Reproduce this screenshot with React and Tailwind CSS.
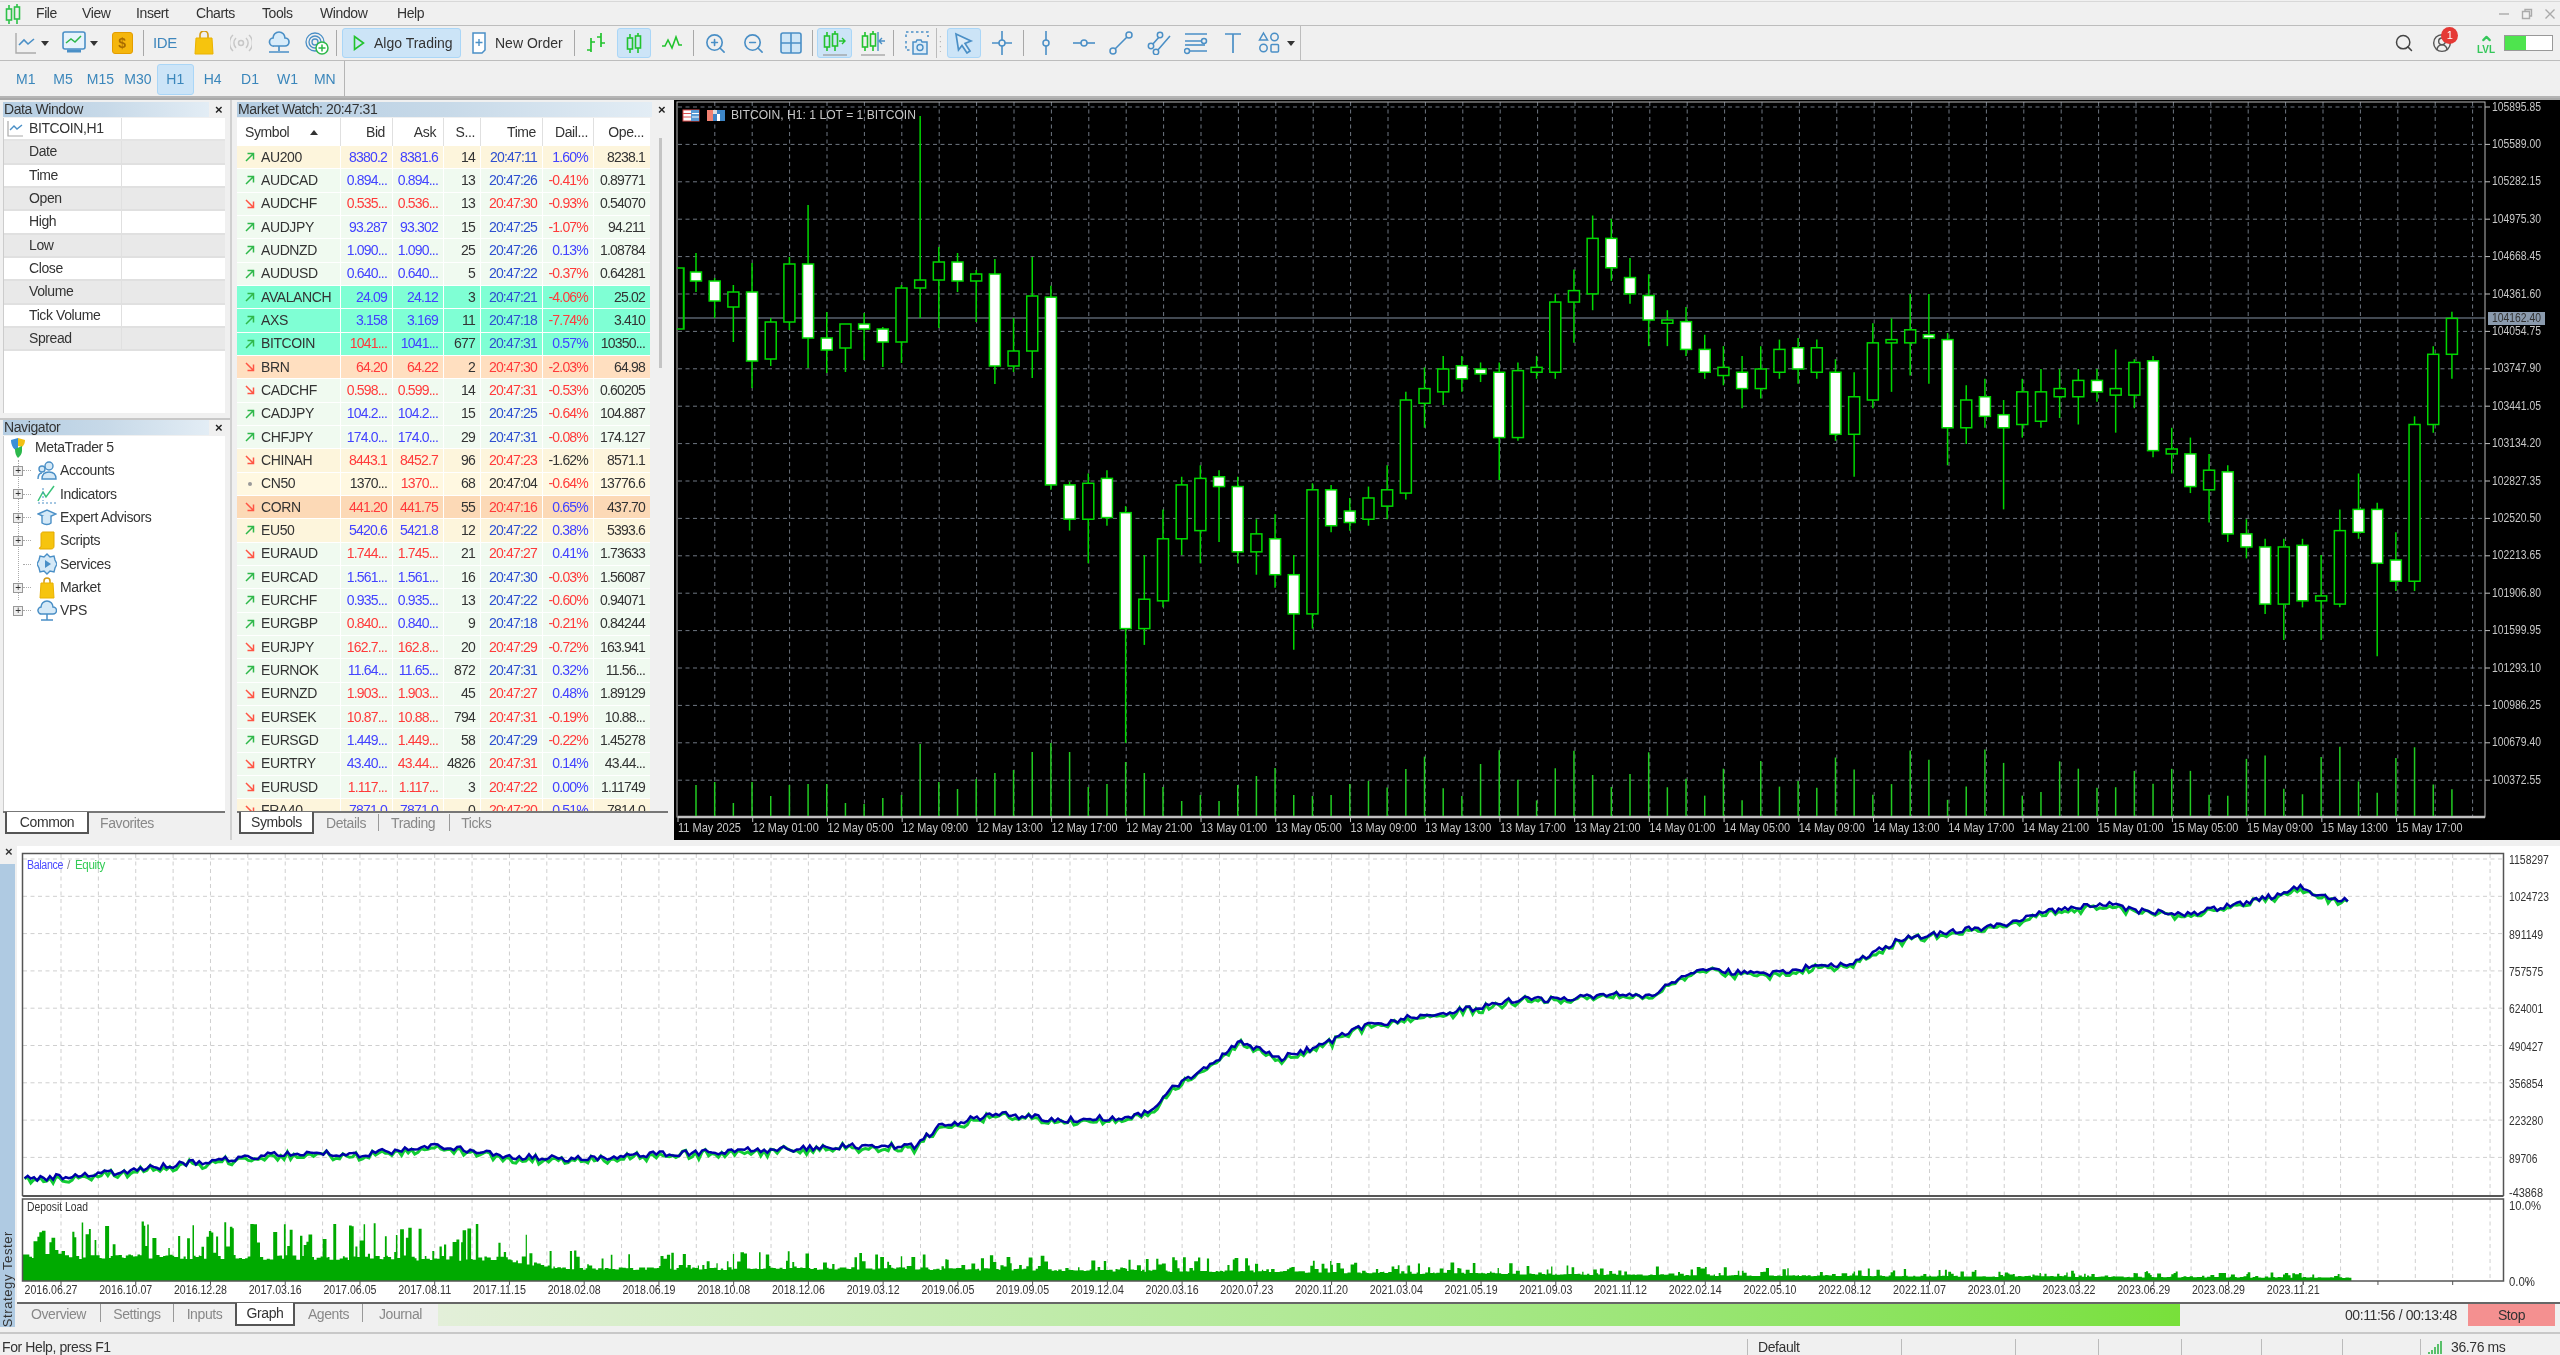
import { ChevronUp, CircleUserRound, Search, ZoomIn, ZoomOut } from 'lucide-react';

const rnd = (i) => {
	const v = Math.sin(i * 127.1 + 11.7) * 43758.5453;
	return v - Math.floor(v);
};

const BLUE = '#4a8fc6';
const GREEN = '#22c32e';

function Ico({ w = 24, h = 24, children, className = '' }) {
	return (
		<svg width={w} height={h} viewBox={`0 0 ${w} ${h}`} fill="none" className={className}>
			{children}
		</svg>
	);
}

function Caret() {
	return <span className="w-0 h-0 border-x-[4px] border-x-transparent border-t-[5px] border-t-[#333]" />;
}

function CandlePair({ c = GREEN, x = 0, y = 0 }) {
	return (
		<g stroke={c} strokeWidth="1.6" transform={`translate(${x} ${y})`}>
			<path d="M4 1v4M4 16v4M12 0v3M12 15v5" />
			<rect x="1.5" y="5" width="5" height="11" />
			<rect x="9.5" y="3" width="5" height="12" />
		</g>
	);
}

function Toolbar1() {
	const Sep = ({ ml = 0 }) => <span style={{ marginLeft: ml }} className="w-px h-[26px] bg-[#a8a8a8] shrink-0" />;
	const Slot = ({ w, on, children, className = '' }) => (
		<div
			style={{ width: w }}
			className={`shrink-0 h-[30px] flex items-center justify-center gap-1 rounded-[3px] ${
				on ? 'bg-[#cce4f7] border border-[#aad6f7]' : ''
			} ${className}`}>
			{children}
		</div>
	);
	return (
		<div className="h-[35px] flex items-center pl-[5px] border-b border-b-[#bdbdbd] relative">
			<Slot w={53}>
				<Ico w={22} h={22}>
					<path d="M1 1v20h20" stroke="#aaa" strokeWidth="1.4" />
					<path d="M4 13l5-5 4 4 6-5" stroke={BLUE} strokeWidth="1.6" />
				</Ico>
				<Caret />
			</Slot>
			<Slot w={43}>
				<Ico w={24} h={24}>
					<rect x="1" y="1" width="22" height="17" rx="2" stroke={BLUE} strokeWidth="1.6" fill="#e7f3fb" />
					<path d="M4 12l5-4 4 3 6-6" stroke="#2db84a" strokeWidth="1.5" />
					<path d="M5 20h14" stroke={BLUE} strokeWidth="3" />
				</Ico>
				<Caret />
			</Slot>
			<Slot w={42}>
				<div className="w-[21px] h-[22px] rounded-[3px] bg-[#f5b60d] border border-[#e39d00] flex items-center justify-center text-[#a86b00] font-bold text-[14px]">$</div>
			</Slot>
			<Sep />
			<Slot w={42}>
				<span className="text-[#3f87bd] text-[15px]">IDE</span>
			</Slot>
			<Slot w={36}>
				<Ico w={20} h={24}>
					<path d="M6 8V4a4 4 0 0 1 8 0v4" stroke="#d49a12" strokeWidth="1.6" />
					<path d="M2 7h16l1 16H1z" fill="#f6c40e" stroke="#eab200" />
				</Ico>
			</Slot>
			<Slot w={37}>
				<Ico w={22} h={20}>
					<g stroke="#c7c7c7" strokeWidth="1.5">
						<circle cx="11" cy="10" r="2.5" />
						<path d="M6 5a7 7 0 0 0 0 10M16 5a7 7 0 0 1 0 10M3 2a11 11 0 0 0 0 16M19 2a11 11 0 0 1 0 16" />
					</g>
				</Ico>
			</Slot>
			<Slot w={39}>
				<Ico w={22} h={24}>
					<g stroke={BLUE} strokeWidth="1.7">
						<path d="M6 15a4 4 0 0 1-1-8 6 6 0 0 1 12 0 4 4 0 0 1 0 8z" fill="#d8ecfa" />
						<path d="M11 15v5M1 21h20" />
					</g>
				</Ico>
			</Slot>
			<Slot w={37}>
				<Ico w={24} h={24}>
					<g stroke={BLUE} strokeWidth="1.3">
						<circle cx="10" cy="11" r="9" />
						<circle cx="10" cy="11" r="6" />
						<circle cx="10" cy="11" r="3" />
					</g>
					<circle cx="17" cy="17" r="6" fill="#fff" stroke="#2db84a" strokeWidth="1.5" />
					<path d="M17 13.5v7M13.5 17h7" stroke="#2db84a" strokeWidth="1.5" />
				</Ico>
			</Slot>
			<Sep ml={1} />
			<div className="ml-[5px] w-[119px] h-[30px] shrink-0 flex items-center pl-[10px] gap-[9px] rounded-[3px] bg-[#cce4f7] border border-[#aad6f7] tracking-normal text-[#333]">
				<Ico w={12} h={16}>
					<path d="M1.5 1.5l9 6.5-9 6.5z" stroke={GREEN} strokeWidth="1.6" />
				</Ico>
				<span>Algo Trading</span>
			</div>
			<div className="ml-[2px] w-[107px] h-[30px] shrink-0 flex items-center pl-[8px] gap-[8px] tracking-normal text-[#333]">
				<Ico w={16} h={22}>
					<path d="M2 1h12v17l-3 3H2z" stroke={BLUE} strokeWidth="1.5" fill="#fff" />
					<path d="M8 7v7M4.5 10.500h7" stroke={BLUE} strokeWidth="1.4" />
				</Ico>
				<span>New Order</span>
			</div>
			<Sep ml={4} />
			<Slot w={42}>
				<Ico w={22} h={24}>
					<path d="M6 7v14M2 19h4M6 11h4M16 2v14M12 6h4M16 12h4" stroke={GREEN} strokeWidth="1.7" />
				</Ico>
			</Slot>
			<Slot w={34} on>
				<Ico w={16} h={20}>
					<CandlePair />
				</Ico>
			</Slot>
			<Slot w={42}>
				<Ico w={22} h={16}>
					<path d="M1 11h3l3-6 4 8 4-11 3 8h3" stroke={GREEN} strokeWidth="1.6" />
				</Ico>
			</Slot>
			<Sep />
			<Slot w={43}>
				<ZoomIn size={23} color={BLUE} strokeWidth={1.7} />
			</Slot>
			<Slot w={32}>
				<ZoomOut size={23} color={BLUE} strokeWidth={1.7} />
			</Slot>
			<Slot w={43}>
				<Ico w={22} h={22}>
					<rect x="1" y="1" width="20" height="20" rx="2" fill="#cfe6f6" stroke={BLUE} strokeWidth="1.6" />
					<path d="M11 1v20M1 11h20" stroke={BLUE} strokeWidth="1.6" />
				</Ico>
			</Slot>
			<Sep />
			<Slot w={35} on className="ml-1">
				<Ico w={24} h={26}>
					<CandlePair x={0} y={1} />
					<path d="M16 11h6M19 8l3 3-3 3" stroke={GREEN} strokeWidth="1.4" />
					<path d="M0 25h24" stroke="#999" strokeWidth="1.2" />
				</Ico>
			</Slot>
			<Slot w={41}>
				<Ico w={24} h={26}>
					<CandlePair x={0} y={1} />
					<path d="M17 2v19" stroke={BLUE} strokeWidth="1.4" />
					<path d="M24 11h-5M21 8l-3 3 3 3" stroke={BLUE} strokeWidth="1.4" />
					<path d="M0 25h24" stroke="#999" strokeWidth="1.2" />
				</Ico>
			</Slot>
			<Sep />
			<Slot w={42} className="pl-1">
				<Ico w={24} h={24}>
					<path d="M1 6V1h22v5M1 10v9h5" stroke={BLUE} strokeWidth="1.5" strokeDasharray="2.500 2.500" />
					<path d="M8 11h3l1-2h4l1 2h5v12H8z" stroke={BLUE} strokeWidth="1.5" fill="#dcecf8" />
					<circle cx="15" cy="16.500" r="3" stroke={BLUE} strokeWidth="1.4" />
				</Ico>
			</Slot>
			<div className="w-[11px] h-[30px] shrink-0 border-l border-l-[#bbb] ml-0 pl-[2px] text-[#b5b5b5] text-[10px] leading-[5px] flex flex-col justify-center">
				<span>:</span>
				<span>:</span>
				<span>:</span>
			</div>
			<Slot w={34} on>
				<Ico w={20} h={22}>
					<path d="M2 2l15 7-6 2.500L16 19l-3 2-5-7.500-3.500 4.500z" stroke={BLUE} strokeWidth="1.7" fill="#dcecf8" />
				</Ico>
			</Slot>
			<Slot w={42}>
				<Ico w={22} h={26}>
					<path d="M11 1v24M1 13h20" stroke={BLUE} strokeWidth="1.6" />
					<circle cx="11" cy="13" r="3" fill="#f0f0f0" stroke={BLUE} strokeWidth="1.5" />
				</Ico>
			</Slot>
			<Sep />
			<Slot w={44}>
				<Ico w={10} h={26}>
					<path d="M5 1v24" stroke={BLUE} strokeWidth="1.6" />
					<circle cx="5" cy="13" r="3" fill="#f0f0f0" stroke={BLUE} strokeWidth="1.5" />
				</Ico>
			</Slot>
			<Slot w={32}>
				<Ico w={22} h={10}>
					<path d="M0 5h22" stroke={BLUE} strokeWidth="1.6" />
					<circle cx="11" cy="5" r="3" fill="#f0f0f0" stroke={BLUE} strokeWidth="1.5" />
				</Ico>
			</Slot>
			<Slot w={42}>
				<Ico w={24} h={24}>
					<path d="M5 19L19 5" stroke={BLUE} strokeWidth="1.6" />
					<circle cx="4" cy="20" r="3" fill="#f0f0f0" stroke={BLUE} strokeWidth="1.5" />
					<circle cx="20" cy="4" r="3" fill="#f0f0f0" stroke={BLUE} strokeWidth="1.5" />
				</Ico>
			</Slot>
			<Slot w={34}>
				<Ico w={24} h={24}>
					<path d="M5 14l8-9M10 20l13-15" stroke={BLUE} strokeWidth="1.6" />
					<circle cx="4" cy="15" r="2.700" fill="#f0f0f0" stroke={BLUE} strokeWidth="1.5" />
					<circle cx="13" cy="4" r="2.700" fill="#f0f0f0" stroke={BLUE} strokeWidth="1.5" />
					<circle cx="9" cy="21" r="2.700" fill="#f0f0f0" stroke={BLUE} strokeWidth="1.5" />
				</Ico>
			</Slot>
			<Slot w={40}>
				<Ico w={24} h={24}>
					<path d="M1 3h22M1 10h18M5 20h18" stroke={BLUE} strokeWidth="1.6" />
					<path d="M1 14h20" stroke={BLUE} strokeWidth="1.6" />
					<circle cx="20" cy="10" r="2.500" fill="#f0f0f0" stroke={BLUE} strokeWidth="1.5" />
					<circle cx="3" cy="20" r="2.500" fill="#f0f0f0" stroke={BLUE} strokeWidth="1.5" />
				</Ico>
			</Slot>
			<Slot w={34}>
				<Ico w={18} h={22}>
					<path d="M1 2h16M9 2v19" stroke={BLUE} strokeWidth="1.7" />
				</Ico>
			</Slot>
			<div className="w-[50px] h-[30px] shrink-0 flex items-center pl-[8px] gap-[7px] border-r-0">
				<Ico w={22} h={24}>
					<g stroke={BLUE} strokeWidth="1.5">
						<path d="M5.500 2l4 7h-8z" />
						<circle cx="16.500" cy="6" r="3.700" />
						<circle cx="5.500" cy="17" r="3.700" />
						<rect x="13" y="13.500" width="7.500" height="7.500" rx="1" />
					</g>
				</Ico>
				<Caret />
			</div>
			<div className="w-px h-[34px] bg-[#bdbdbd] shrink-0" />
			<div className="ml-auto flex items-center h-[30px]">
				<Search size={20} color="#444" strokeWidth={1.8} />
				<div className="ml-[18px] w-[26px] h-[24px] relative">
					<CircleUserRound size={20} color="#555" strokeWidth={1.7} className="mt-[2px]" />
					<span className="absolute -top-[4px] left-[9px] w-[17px] h-[17px] rounded-full bg-[#e53935] text-white text-[11px] flex items-center justify-center">1</span>
				</div>
				<div className="ml-[18px] w-[20px] flex flex-col items-center text-[#35c75a] leading-[10px]">
					<ChevronUp size={13} strokeWidth={4} />
					<span className="text-[10px] font-bold tracking-normal">LVL</span>
				</div>
				<div className="ml-[8px] mr-[7px] w-[49px] h-[16px] border border-[#999] bg-white">
					<div className="w-[21px] h-full bg-[#4ee44e]" />
				</div>
			</div>
		</div>
	);
}

function MenuBar() {
	const items = [
		['File', 46],
		['View', 54],
		['Insert', 60],
		['Charts', 66],
		['Tools', 58],
		['Window', 77],
		['Help', 40],
	];
	return (
		<div className="h-[25px] mt-[1px] border-t border-t-[#d8d8d8] border-b border-b-[#bdbdbd] flex items-center">
			<div className="w-[36px] pl-[5px] flex items-center">
				<Ico w={16} h={20}>
					<CandlePair c="#2fc24a" />
				</Ico>
			</div>
			{items.map(([t, w]) => (
				<span key={t} style={{ width: w }}>
					{t}
				</span>
			))}
			<div className="ml-auto flex items-center text-[#aaa] pr-[4px] gap-[11px]">
				<Ico w={12} h={12}>
					<path d="M1 6h10" stroke="#aaa" strokeWidth="1.4" />
				</Ico>
				<Ico w={12} h={12}>
					<path d="M1.500 3.500h7v7h-7zM4 3V1.500h6.500V8H9" stroke="#aaa" strokeWidth="1.4" />
				</Ico>
				<Ico w={12} h={12}>
					<path d="M1.500 1.500l9 9M10.500 1.500l-9 9" stroke="#aaa" strokeWidth="1.4" />
				</Ico>
			</div>
		</div>
	);
}

function Toolbar2() {
	const frames = ['M1', 'M5', 'M15', 'M30', 'H1', 'H4', 'D1', 'W1', 'MN'];
	return (
		<div className="h-[37px] flex items-start pl-[7px] border-b-2 border-b-[#b5b5b5]">
			<div className="flex h-[34px] items-end">
				{frames.map((f) => (
					<span
						key={f}
						className={`w-[37.4px] h-[31px] flex items-center justify-center tracking-normal text-[#3a86bb] rounded-[3px] ${
							f === 'H1' ? 'bg-[#cce4f7] border border-[#aad6f7]' : ''
						}`}>
						{f}
					</span>
				))}
			</div>
			<span className="w-px h-[35px] bg-[#b5b5b5]" />
		</div>
	);
}

function PanelHead({ title, width, closeAt }) {
	return (
		<div className="h-[15px] flex items-center">
			<div style={{ width }} className="h-[15px] bg-gradient-to-r from-[#b4cde2] via-[#c7d9e8] to-[#e3edf5] leading-[15px] pl-[1px] text-[#333]">
				{title}
			</div>
			<span style={{ marginLeft: closeAt }} className="font-bold text-[13px] leading-[15px] text-[#222]">×</span>
		</div>
	);
}

const dataRows = ['Date', 'Time', 'Open', 'High', 'Low', 'Close', 'Volume', 'Tick Volume', 'Spread'];

function DataWindow() {
	return (
		<div className="h-[320px] pt-[2px] pl-[3px] border-b-2 border-b-[#c8c8c8]">
			<PanelHead title="Data Window" width={206} closeAt={6} />
			<div className="h-[295px] w-[222px] mt-[1px] bg-white border-l border-l-[#ccc]">
				<div className="h-[23.33px] flex items-center border-b-2 border-b-[#e4e4e4]">
					<div className="w-[117px] flex items-center pl-[3px] gap-[5px]">
						<Ico w={17} h={17}>
							<path d="M1 1v15h15" stroke="#aaa" strokeWidth="1.2" />
							<path d="M3 10l4-4 3 3 5-4" stroke={BLUE} strokeWidth="1.4" />
						</Ico>
						<span>BITCOIN,H1</span>
					</div>
					<div className="flex-1 h-full border-l border-l-[#e0e0e0]" />
				</div>
				{dataRows.map((r, i) => (
					<div key={r} className={`h-[23.33px] flex items-center border-b-2 border-b-[#e0e0e0] ${i % 2 ? 'bg-white' : 'bg-[#e9e9e9]'}`}>
						<div className="w-[117px] pl-[25px]">{r}</div>
						<div className="flex-1 h-full border-l border-l-[#e0e0e0]" />
					</div>
				))}
			</div>
		</div>
	);
}

function NavIcon({ name }) {
	if (name === 'MetaTrader 5')
		return (
			<Ico w={18} h={22}>
				<path d="M2 3l7-2v13c-4-1-7-5-7-11z" fill="#3a8fd6" />
				<path d="M9 1l7 2c0 3-1 5-3 7L9 9z" fill="#f2c014" />
				<path d="M6 12l7-3v5c0 3-2 5-4 7-2-2-3-5-3-9z" fill="#2cb84c" />
			</Ico>
		);
	if (name === 'Accounts')
		return (
			<Ico w={20} h={20}>
				<g stroke={BLUE} strokeWidth="1.4" fill="#d5e9f7">
					<circle cx="12" cy="5" r="4" />
					<path d="M5 18c0-5 3-7 7-7s7 2 7 7z" />
					<circle cx="5" cy="8" r="3" />
					<path d="M1 18c0-4 1-6 4-6" />
				</g>
			</Ico>
		);
	if (name === 'Indicators')
		return (
			<Ico w={20} h={20}>
				<path d="M1 17l5-9 3 5 8-11" stroke="#3bc37a" strokeWidth="1.5" />
				<path d="M1 19h18M6 4v13" stroke={BLUE} strokeWidth="1" strokeDasharray="2 2" />
			</Ico>
		);
	if (name === 'Expert Advisors')
		return (
			<Ico w={20} h={20}>
				<g stroke={BLUE} strokeWidth="1.4" fill="#d5e9f7">
					<path d="M1 6l9-4 9 4-9 4z" />
					<path d="M5 8v7c3 2 7 2 9 0V8" />
				</g>
			</Ico>
		);
	if (name === 'Scripts')
		return (
			<Ico w={18} h={20}>
				<path d="M5 1h11v14c0 2-1 3-3 3H2c-1 0-1-2 1-2V3c0-1 1-2 2-2z" fill="#f6c40e" stroke="#e3a900" />
			</Ico>
		);
	if (name === 'Services')
		return (
			<Ico w={20} h={22}>
				<path d="M10 1l3 3 4-1 1 4 2 4-2 4-1 4-4-1-3 3-3-3-4 1-1-4-2-4 2-4 1-4 4 1z" stroke={BLUE} strokeWidth="1.4" fill="#d5e9f7" />
				<path d="M8 7l6 4-6 4z" fill={BLUE} />
			</Ico>
		);
	if (name === 'Market')
		return (
			<Ico w={16} h={22}>
				<path d="M5 8V4a3 3 0 0 1 6 0v4" stroke="#d49a12" strokeWidth="1.5" />
				<path d="M2 6h12l1 15H1z" fill="#f6c40e" stroke="#eab200" />
			</Ico>
		);
	return (
		<Ico w={20} h={22}>
			<g stroke={BLUE} strokeWidth="1.5">
				<path d="M5 14a3.500 3.500 0 0 1-1-7 6 6 0 0 1 12 0 3.500 3.500 0 0 1 0 7z" fill="#d5e9f7" />
				<path d="M10 14v6M4 20h12" />
			</g>
		</Ico>
	);
}

const navRows = [
	['Accounts', true],
	['Indicators', true],
	['Expert Advisors', true],
	['Scripts', true],
	['Services', false],
	['Market', true],
	['VPS', true],
];

function Navigator() {
	return (
		<div className="flex-1 pl-[3px] flex flex-col min-h-0">
			<PanelHead title="Navigator" width={206} closeAt={6} />
			<div className="h-[375px] w-[222px] mt-[1px] bg-white border-l border-l-[#ccc] relative">
				<div className="h-[23.33px] flex items-center pl-[5px] gap-[8px]">
					<NavIcon name="MetaTrader 5" />
					<span>MetaTrader 5</span>
				</div>
				<div className="absolute left-[14px] top-[24px] h-[140px] border-l border-dotted border-l-[#aaa]" />
				{navRows.map(([n, plus]) => (
					<div key={n} className="h-[23.33px] flex items-center relative">
						<div className="w-[30px] flex items-center pl-[9px]">
							{plus ? (
								<span className="relative z-10 w-[10px] h-[10px] border border-[#999] bg-[#eee] text-[#333] text-[10px] leading-[8px] flex items-center justify-center">+</span>
							) : (
								<span className="w-[10px]" />
							)}
							<span className="w-[8px] border-t border-dotted border-t-[#aaa]" />
						</div>
						<div className="w-[25px] flex justify-center">
							<NavIcon name={n} />
						</div>
						<span className="ml-[1px]">{n}</span>
					</div>
				))}
			</div>
			<div className="h-[22px] w-[222px] border-t-2 border-t-[#777] flex items-start">
				<div className="ml-[2px] w-[84px] h-[22px] -mt-[1px] bg-white border-x-2 border-b-2 border-x-[#555] border-b-[#555] flex items-center justify-center">Common</div>
				<span className="ml-[11px] text-[#888]">Favorites</span>
			</div>
		</div>
	);
}

const b = '#4242ff';
const r = '#ff3a3a';
const k = '#333';
const tb = '#2e4fd0';
const Y = '#fdf5dc';
const G = '#f0faf0';
const A = '#7fffd4';
const rows = [
	['u', 'AU200', '8380.2', b, '8381.6', b, '14', '20:47:11', tb, '1.60%', b, '8238.1', Y],
	['u', 'AUDCAD', '0.894...', b, '0.894...', b, '13', '20:47:26', tb, '-0.41%', r, '0.89771', G],
	['d', 'AUDCHF', '0.535...', r, '0.536...', r, '13', '20:47:30', r, '-0.93%', r, '0.54070', G],
	['u', 'AUDJPY', '93.287', b, '93.302', b, '15', '20:47:25', tb, '-1.07%', r, '94.211', G],
	['u', 'AUDNZD', '1.090...', b, '1.090...', b, '25', '20:47:26', tb, '0.13%', b, '1.08784', G],
	['u', 'AUDUSD', '0.640...', b, '0.640...', b, '5', '20:47:22', tb, '-0.37%', r, '0.64281', G],
	['u', 'AVALANCH', '24.09', b, '24.12', b, '3', '20:47:21', tb, '-4.06%', r, '25.02', A],
	['u', 'AXS', '3.158', b, '3.169', b, '11', '20:47:18', tb, '-7.74%', r, '3.410', A],
	['u', 'BITCOIN', '1041...', r, '1041...', b, '677', '20:47:31', tb, '0.57%', b, '10350...', A],
	['d', 'BRN', '64.20', r, '64.22', r, '2', '20:47:30', r, '-2.03%', r, '64.98', '#ffdfc0'],
	['d', 'CADCHF', '0.598...', r, '0.599...', r, '14', '20:47:31', r, '-0.53%', r, '0.60205', G],
	['u', 'CADJPY', '104.2...', b, '104.2...', b, '15', '20:47:25', tb, '-0.64%', r, '104.887', G],
	['u', 'CHFJPY', '174.0...', b, '174.0...', b, '29', '20:47:31', tb, '-0.08%', r, '174.127', G],
	['d', 'CHINAH', '8443.1', r, '8452.7', r, '96', '20:47:23', r, '-1.62%', k, '8571.1', Y],
	['n', 'CN50', '1370...', k, '1370...', r, '68', '20:47:04', k, '-0.64%', r, '13776.6', '#fff8e1'],
	['d', 'CORN', '441.20', r, '441.75', r, '55', '20:47:16', r, '0.65%', b, '437.70', '#fcd9b6'],
	['u', 'EU50', '5420.6', b, '5421.8', b, '12', '20:47:22', tb, '0.38%', b, '5393.6', Y],
	['d', 'EURAUD', '1.744...', r, '1.745...', r, '21', '20:47:27', r, '0.41%', b, '1.73633', G],
	['u', 'EURCAD', '1.561...', b, '1.561...', b, '16', '20:47:30', tb, '-0.03%', r, '1.56087', G],
	['u', 'EURCHF', '0.935...', b, '0.935...', b, '13', '20:47:22', tb, '-0.60%', r, '0.94071', G],
	['u', 'EURGBP', '0.840...', r, '0.840...', b, '9', '20:47:18', tb, '-0.21%', r, '0.84244', G],
	['d', 'EURJPY', '162.7...', r, '162.8...', r, '20', '20:47:29', r, '-0.72%', r, '163.941', G],
	['u', 'EURNOK', '11.64...', b, '11.65...', b, '872', '20:47:31', tb, '0.32%', b, '11.56...', G],
	['d', 'EURNZD', '1.903...', r, '1.903...', r, '45', '20:47:27', r, '0.48%', b, '1.89129', G],
	['d', 'EURSEK', '10.87...', r, '10.88...', r, '794', '20:47:31', r, '-0.19%', r, '10.88...', G],
	['u', 'EURSGD', '1.449...', b, '1.449...', r, '58', '20:47:29', tb, '-0.22%', r, '1.45278', G],
	['d', 'EURTRY', '43.40...', b, '43.44...', r, '4826', '20:47:31', r, '0.14%', b, '43.44...', G],
	['d', 'EURUSD', '1.117...', r, '1.117...', r, '3', '20:47:22', r, '0.00%', b, '1.11749', G],
	['d', 'FRA40', '7871.0', b, '7871.0', b, '0', '20:47:20', r, '0.51%', b, '7814.0', Y],
];

function Dir({ d }) {
	if (d === 'n') return <span className="w-[4px] h-[4px] ml-[3px] mr-[3px] rounded-full bg-[#999]" />;
	return (
		<Ico w={10} h={10}>
			{d === 'u' ? (
				<path d="M1 9l7.500-7.500M2.500 1.500h6v6" stroke="#2fb84a" strokeWidth="1.5" />
			) : (
				<path d="M1 1l7.500 7.500M2.500 8.500h6v-6" stroke="#ff5544" strokeWidth="1.5" />
			)}
		</Ico>
	);
}

const cell = 'h-full flex items-center justify-end pr-[5px] border-r border-r-[#fff] tracking-[-0.8px]';

function MarketWatch() {
	return (
		<div className="w-[442px] shrink-0 pt-[2px] pl-[5px] flex flex-col border-l-2 border-l-[#d0d0d0]">
			<PanelHead title="Market Watch: 20:47:31" width={415} closeAt={6} />
			<div className="flex mt-[1px] h-[693px]">
				<div className="w-[413px] overflow-hidden">
					<div className="h-[28px] bg-white flex items-center text-[#333]">
						<div className="w-[104px] h-full flex items-center pl-[8px] border-r border-r-[#e0e0e0]">
							<span>Symbol</span>
							<span className="ml-[21px] w-0 h-0 border-x-[4px] border-x-transparent border-b-[5px] border-b-[#333]" />
						</div>
						<div className="w-[52px] h-full flex items-center justify-end pr-[7px] border-r border-r-[#e0e0e0]">Bid</div>
						<div className="w-[51px] h-full flex items-center justify-end pr-[7px] border-r border-r-[#e0e0e0]">Ask</div>
						<div className="w-[37px] h-full flex items-center justify-end pr-[5px] border-r border-r-[#e0e0e0]">S...</div>
						<div className="w-[62px] h-full flex items-center justify-end pr-[6px] border-r border-r-[#e0e0e0]">Time</div>
						<div className="w-[51px] h-full flex items-center justify-end pr-[5px] border-r border-r-[#e0e0e0]">Dail...</div>
						<div className="w-[56px] h-full flex items-center justify-end pr-[6px]">Ope...</div>
					</div>
					{rows.map((x) => (
						<div key={x[1]} style={{ backgroundColor: x[12] }} className="h-[23.33px] flex items-center border-b border-b-white">
							<div className="w-[104px] h-full flex items-center pl-[8px] border-r border-r-[#fff]">
								<span className="w-[10px] flex items-center">
									<Dir d={x[0]} />
								</span>
								<span className="ml-[6px]">{x[1]}</span>
							</div>
							<div style={{ color: x[3] }} className={`w-[52px] ${cell}`}>{x[2]}</div>
							<div style={{ color: x[5] }} className={`w-[51px] ${cell}`}>{x[4]}</div>
							<div className={`w-[37px] ${cell}`}>{x[6]}</div>
							<div style={{ color: x[8] }} className={`w-[62px] ${cell}`}>{x[7]}</div>
							<div style={{ color: x[10] }} className={`w-[51px] ${cell}`}>{x[9]}</div>
							<div className={`w-[56px] ${cell} border-r-0`}>{x[11]}</div>
						</div>
					))}
				</div>
				<div className="flex-1">
					<div className="ml-[9px] mt-[20px] w-[3px] h-[230px] bg-[#c4c4c4]" />
				</div>
			</div>
			<div className="h-[22px] w-[431px] border-t-2 border-t-[#777] flex items-start text-[#888]">
				<div className="ml-[2px] w-[75px] h-[22px] -mt-[1px] bg-white border-x-2 border-b-2 border-x-[#555] border-b-[#555] flex items-center justify-center text-[#333]">Symbols</div>
				<span className="ml-[12px]">Details</span>
				<span className="ml-[12px] w-px h-[17px] mt-[1px] bg-[#999]" />
				<span className="ml-[12px]">Trading</span>
				<span className="ml-[14px] w-px h-[17px] mt-[1px] bg-[#999]" />
				<span className="ml-[11px]">Ticks</span>
			</div>
		</div>
	);
}

// y positions read off the picture, 1568 px wide overview: top, bottom, high, low, white
const ov = [
	[182, 297, 175, 300, 1], [297, 318, 295, 325, 1], [296, 318, 290, 345, 0], [293, 317, 288, 322, 1],
	[314, 385, 310, 455, 1], [367, 385, 340, 395, 0], [330, 368, 312, 372, 0], [297, 330, 292, 340, 0],
	[293, 325, 285, 345, 0], [292, 298, 288, 332, 1], [298, 338, 292, 345, 1], [327, 338, 318, 352, 0],
	[330, 352, 315, 360, 1], [352, 376, 340, 398, 1], [300, 376, 296, 385, 0], [300, 322, 297, 326, 1],
	[313, 320, 305, 325, 1], [305, 318, 298, 322, 0], [300, 310, 285, 318, 0], [245, 302, 240, 306, 0],
	[238, 247, 225, 262, 0], [226, 240, 218, 248, 0], [224, 232, 218, 240, 1], [226, 229, 222, 234, 1],
	[228, 268, 222, 294, 1], [227, 268, 222, 270, 0], [225, 228, 218, 232, 0], [185, 228, 180, 232, 0],
	[178, 185, 165, 210, 0], [146, 180, 132, 190, 0], [146, 164, 134, 172, 1], [170, 180, 158, 186, 1],
	[181, 196, 168, 212, 1], [196, 198, 190, 212, 0], [197, 214, 188, 218, 1], [214, 228, 205, 232, 1],
	[225, 230, 212, 236, 0], [228, 238, 218, 250, 1], [226, 238, 212, 244, 0], [214, 228, 208, 232, 0],
	[213, 226, 207, 235, 1], [213, 228, 208, 232, 0], [228, 266, 220, 270, 1], [243, 266, 228, 292, 0],
	[210, 245, 198, 250, 0], [208, 210, 195, 240, 0], [202, 210, 180, 230, 0], [205, 207, 180, 235, 1],
	[208, 262, 204, 285, 1], [245, 262, 236, 272, 0], [243, 255, 232, 262, 1], [254, 262, 245, 312, 1],
	[240, 260, 232, 268, 0], [240, 258, 226, 262, 0], [238, 243, 226, 256, 0], [233, 243, 226, 260, 0],
	[233, 240, 226, 246, 1], [238, 242, 214, 265, 0], [222, 242, 220, 250, 0], [221, 276, 218, 280, 1],
	[275, 278, 262, 290, 0], [278, 298, 268, 302, 1], [288, 300, 278, 320, 0], [289, 327, 285, 332, 1],
	[327, 335, 318, 342, 1], [335, 370, 330, 376, 1], [335, 370, 330, 392, 0], [334, 368, 330, 372, 1],
	[365, 368, 340, 392, 0], [325, 370, 312, 372, 0], [312, 326, 290, 330, 1], [312, 345, 308, 402, 1],
	[343, 356, 326, 362, 1], [260, 356, 255, 362, 0], [217, 260, 212, 265, 0], [195, 217, 191, 232, 0],
];

const candles = [
	[272, 281, 253, 292, 1], [281, 301, 278, 318, 1], [292, 307, 285, 342, 0], [292, 361, 263, 388, 1],
	[322, 359, 318, 366, 0], [264, 322, 257, 330, 0], [264, 338, 205, 368, 1], [338, 350, 312, 373, 1],
	[324, 348, 324, 372, 0], [324, 329, 313, 360, 1], [329, 342, 327, 367, 1], [288, 342, 285, 363, 0],
	[280, 288, 116, 318, 0], [262, 280, 247, 328, 0], [262, 281, 253, 292, 1], [274, 281, 270, 322, 0],
	[274, 366, 259, 384, 1], [351, 366, 318, 372, 0], [296, 351, 257, 378, 0],
	...ov.map((c) => [c[0] * 1.6327, c[1] * 1.6327, c[2] * 1.6327, c[3] * 1.6327, c[4]]),
];

const prices = [
	'105895.85', '105589.00', '105282.15', '104975.30', '104668.45', '104361.60', '104054.75', '103747.90', '103441.05',
	'103134.20', '102827.35', '102520.50', '102213.65', '101906.80', '101599.95', '101293.10', '100986.25', '100679.40', '100372.55',
];
const times = [
	'11 May 2025',
	...['12', '13', '14', '15'].flatMap((d) =>
		['01:00', '05:00', '09:00', '13:00', '17:00', '21:00'].map((h) => `${d} May ${h}`),
	),
].slice(0, 24);
const volTop = [31, 34, 13, 34, 20, 31, 32, 32, 13, 12, 18, 21, 72, 34, 27, 37, 43, 46, 64, 73, 64, 29, 32, 54, 43, 29, 15, 21, 15, 31, 40, 48, 21, 20, 21, 32, 35];

function AxisText({ x, y, w, fill, size = 12, children }) {
	return (
		<text x={x} y={y} textLength={w} lengthAdjust="spacingAndGlyphs" fontSize={size} letterSpacing="0" fill={fill} dominantBaseline="middle">
			{children}
		</text>
	);
}

function PriceChart() {
	const cx = (i) => 696 + 18.68 * i;
	const hLines = prices.map((_, i) => 107 + 37.4 * i);
	const vLines = Array.from({ length: 48 }, (_, i) => 714.8 + 37.4 * i);
	return (
		<svg width="1886" height="740" viewBox="674 100 1886 740" className="block shrink-0 bg-black">
			<g stroke="#6f7782" strokeWidth="1" strokeDasharray="4 3.500">
				{hLines.map((y) => (
					<path key={y} d={`M678 ${y}H2485`} />
				))}
				{vLines.map((x) => (
					<path key={x} d={`M${x} 102V817`} />
				))}
			</g>
			<path d="M678 318H2485" stroke="#59626e" strokeWidth="1.5" />
			<rect x="677" y="102" width="1808" height="715" stroke="#b8b8b8" strokeWidth="1" fill="none" />
			<path d="M678 817H2485" stroke="#c0c0c0" strokeWidth="2.500" />
			<g>
				<path d="M683.500 268V329M677 268h7v61h-7" stroke="#00cc00" strokeWidth="1.500" fill="none" />
				{candles.map(([t, bt, h, l, w], i) => {
					const x = cx(i);
					return (
						<g key={i} stroke="#00d800" strokeWidth="1.500">
							<path d={`M${x} ${h}V${l}`} />
							<rect x={x - 5.500} y={t} width="11" height={Math.max(bt - t, 2)} fill={w ? '#fff' : '#000'} />
						</g>
					);
				})}
				{candles.map((_, i) => {
					const h = volTop[i] ?? 14 + Math.abs(Math.sin(i * 2.3) * Math.sin(i * 0.7)) * 52 + rnd(i) * 10;
					return <path key={i} d={`M${cx(i)} 816V${816 - h}`} stroke="#22cc22" strokeWidth="1.500" />;
				})}
			</g>
			<g stroke="#c0c0c0" strokeWidth="1">
				{times.map((_, i) => (
					<path key={i} d={`M${678 + 74.72 * i} 817v5`} />
				))}
				{hLines.map((y) => (
					<path key={y} d={`M2485 ${y}h5`} />
				))}
			</g>
			{times.map((t, i) => (
				<AxisText key={t} x={678 + 74.72 * i} y={829} w={i === 0 ? 63 : 66} fill="#c8c8c8">
					{t}
				</AxisText>
			))}
			{prices.map((p, i) => (
				<AxisText key={p} x={2492} y={107.500 + 37.4 * i} w={49} fill="#c8c8c8">
					{p}
				</AxisText>
			))}
			<rect x="2488" y="312" width="57" height="13" fill="#8b9bae" />
			<AxisText x={2492} y={319} w={49} fill="#333">
				104162.40
			</AxisText>
			<g>
				<rect x="683" y="110" width="16" height="11" fill="#fff" stroke="#e05050" />
				<path d="M683 113.500h16M683 117h16" stroke="#e05050" />
				<path d="M691 110h8v11h-8z" fill="#5b9bd5" />
				<path d="M692 113.500h7M692 117h7" stroke="#fff" />
				<path d="M707 110h6v11h-6z" fill="#f08070" />
				<path d="M713 110h12v11h-12z" fill="#3d85c6" />
				<rect x="713" y="110" width="4" height="4" fill="#ddd" />
				<path d="M717 114h3v7h-3z" fill="#fff" />
			</g>
			<AxisText x={731} y={115.500} w={185} fill="#c8c8c8">
				BITCOIN, H1:  1 LOT = 1 BITCOIN
			</AxisText>
		</svg>
	);
}

const bal = [
	[15, 722], [50, 720], [80, 717], [110, 713], [140, 710], [180, 706], [220, 707], [270, 702], [310, 708], [350, 710], [400, 707],
	[450, 705], [520, 702], [560, 702], [575, 690], [610, 682], [650, 686], [695, 684], [705, 680], [720, 665], [745, 650], [760, 638],
	[785, 648], [810, 640], [830, 630], [870, 622], [900, 618], [930, 612], [960, 612], [990, 608], [1010, 610], [1030, 598], [1045, 594],
	[1080, 597], [1110, 592], [1135, 590], [1165, 575], [1200, 570], [1225, 567], [1255, 558], [1290, 553], [1310, 558], [1340, 560],
	[1380, 552], [1395, 548], [1409, 543], [1420, 548], [1438, 552],
];

function balancePath(off) {
	const pts = [];
	bal.forEach(([x, y], i) => {
		if (i === bal.length - 1) return pts.push([x * 1.6327, y * 1.6327]);
		const [nx, ny] = bal[i + 1];
		const steps = Math.max(2, Math.round((nx - x) / 2));
		for (let s = 0; s < steps; s++) {
			const t = s / steps;
			const j = (rnd(x * 7 + s) - 0.5) * 6 + (rnd(x * 3 + s * 5 + off) - 0.5) * (off ? 5 : 0);
			pts.push([(x + (nx - x) * t) * 1.6327, (y + (ny - y) * t) * 1.6327 + j + off]);
		}
	});
	return 'M' + pts.map((p) => `${p[0].toFixed(1)} ${p[1].toFixed(1)}`).join('L');
}

function depositPath() {
	let d = '';
	let x = 23;
	let i = 0;
	const env = (v) => {
		const stops = [[23, 22, 40], [500, 20, 38], [560, 11, 22], [900, 11, 18], [1300, 8, 14], [1700, 5, 9], [2350, 3, 5]];
		for (let n = 0; n < stops.length - 1; n++) {
			const [a, ab, ap] = stops[n];
			const [c, cb, cp] = stops[n + 1];
			if (v <= c) {
				const t = (v - a) / (c - a);
				return [ab + (cb - ab) * t, ap + (cp - ap) * t];
			}
		}
		return [3, 5];
	};
	while (x < 2350) {
		const w = 1.2 + rnd(i) * 2.8;
		const [base, peak] = env(x);
		const roll = rnd(i + 500);
		const h = base + (roll > 0.62 ? rnd(i + 900) * peak : rnd(i + 900) * base * 0.25);
		d += `M${x.toFixed(1)} 1281V${(1281 - h).toFixed(1)}H${(x + w).toFixed(1)}V1281z`;
		x += w;
		i++;
	}
	return d;
}

const axisUp = ['1158297', '1024723', '891149', '757575', '624001', '490427', '356854', '223280', '89706'];
const dates = [
	'2016.06.27', '2016.10.07', '2016.12.28', '2017.03.16', '2017.06.05', '2017.08.11', '2017.11.15', '2018.02.08', '2018.06.19', '2018.10.08',
	'2018.12.06', '2019.03.12', '2019.06.05', '2019.09.05', '2019.12.04', '2020.03.16', '2020.07.23', '2020.11.20', '2021.03.04', '2021.05.19',
	'2021.09.03', '2021.11.12', '2022.02.14', '2022.05.10', '2022.08.12', '2022.11.07', '2023.01.20', '2023.03.22', '2023.06.29', '2023.08.29', '2023.11.21',
];

function TesterChart() {
	const hLines = Array.from({ length: 9 }, (_, i) => 859 + 37.3 * i);
	const vLines = Array.from({ length: 66 }, (_, i) => 61 + 37.37 * i);
	return (
		<svg width="2543" height="456" viewBox="17 846 2543 456" className="block bg-white shrink-0">
			<g stroke="#cfcfcf" strokeDasharray="4 3.500">
				{hLines.map((y) => (
					<path key={y} d={`M23 ${y}H2503`} />
				))}
				{vLines.map((x) => (
					<path key={x} d={`M${x} 854V1281`} />
				))}
			</g>
			<path d={depositPath()} fill="#00aa00" />
			<path d={balancePath(2)} stroke="#11cc33" strokeWidth="3" fill="none" />
			<path d={balancePath(0)} stroke="#0000a8" strokeWidth="2.500" fill="none" />
			<g stroke="#555" fill="none" strokeWidth="1.500">
				<path d="M22.500 1196V853.500H2503.500V1196" />
				<path d="M22.500 1196H2503.500" strokeWidth="2" />
				<path d="M22.500 1199H2503.500V1281H22.500z" strokeWidth="1.500" />
			</g>
			<g stroke="#555" strokeWidth="1">
				{dates.map((_, i) => (
					<path key={i} d={`M${61 + 74.74 * i} 1281v4`} />
				))}
				{Array.from({ length: 4 }, (_, i) => (
					<path key={i} d={`M${61 + 74.74 * (i + 30)} 1281v4`} />
				))}
			</g>
			{dates.map((t, i) => (
				<AxisText key={t} x={24.500 + 74.74 * i} y={1291} w={53} fill="#333">
					{t}
				</AxisText>
			))}
			{axisUp.map((t, i) => (
				<AxisText key={t} x={2509} y={861 + 37.3 * i} w={t.length * 5.7} fill="#333">
					{t}
				</AxisText>
			))}
			<AxisText x={2509} y={1194} w={34} fill="#333">
				-43868
			</AxisText>
			<AxisText x={2509} y={1207} w={32} fill="#333">
				10.0%
			</AxisText>
			<AxisText x={2509} y={1283} w={26} fill="#333">
				0.0%
			</AxisText>
			<text x="27" y="866" fontSize="12" fill="#4a4aff" dominantBaseline="middle" textLength="36" lengthAdjust="spacingAndGlyphs">
				Balance
			</text>
			<text x="67" y="866" fontSize="12" fill="#888" dominantBaseline="middle">
				/
			</text>
			<text x="75" y="866" fontSize="12" fill="#33cc55" dominantBaseline="middle" textLength="30" lengthAdjust="spacingAndGlyphs">
				Equity
			</text>
			<AxisText x={27} y={1208} w={61} fill="#333">
				Deposit Load
			</AxisText>
		</svg>
	);
}

function TesterTabs() {
	const Pipe = () => <span className="w-px h-[18px] bg-[#999] shrink-0" />;
	return (
		<div className="h-[25px] flex items-start border-t-2 border-t-[#666] text-[#888]">
			<div className="w-[83px] h-[21px] flex items-center justify-center">Overview</div>
			<Pipe />
			<div className="w-[72px] h-[21px] flex items-center justify-center">Settings</div>
			<Pipe />
			<div className="w-[61px] h-[21px] flex items-center justify-center">Inputs</div>
			<div className="w-[60px] h-[23px] -mt-[1px] bg-white border-x-2 border-b-2 border-x-[#555] border-b-[#555] flex items-center justify-center text-[#333]">Graph</div>
			<div className="w-[67px] h-[21px] flex items-center justify-center">Agents</div>
			<Pipe />
			<div className="w-[75px] h-[21px] flex items-center justify-center">Journal</div>
			<div className="w-[1742px] h-[22px] bg-gradient-to-r from-[#e3efd9] to-[#78e03a]" />
			<div className="flex-1 h-[22px] flex items-center justify-end pr-[11px] text-[#333]">00:11:56 / 00:13:48</div>
			<div className="w-[87px] h-[22px] bg-[#f49090] flex items-center justify-center text-[#333] mr-[5px]">Stop</div>
		</div>
	);
}

function StatusBar() {
	return (
		<div className="h-[23px] border-t-2 border-t-[#c8c8c8] pt-[5px] flex items-center text-[#333]">
			<div className="w-[1747px] pl-[2px]">For Help, press F1</div>
			<div className="w-[154px] pl-[10px] h-full flex items-center border-l border-l-[#bbb]">Default</div>
			{[114, 83, 83, 80, 81, 78].map((w, i) => (
				<div key={i} style={{ width: w }} className="h-full border-l border-l-[#bbb]" />
			))}
			<div className="flex-1 h-full flex items-center pl-[7px] gap-[7px] border-l border-l-[#bbb]">
				<Ico w={16} h={16}>
					<path d="M1 15v-2M4 15v-4M7 15V8M10 15V5M13 15V2" stroke="#35b54a" strokeWidth="1.600" />
				</Ico>
				<span>36.76 ms</span>
			</div>
		</div>
	);
}

export default function App() {
	return (
		<div className="w-[2560px] h-[1355px] overflow-hidden bg-[#f0f0f0] flex flex-col text-[14px] tracking-[-0.4px] text-[#333] blur-[0.5px] font-['Liberation_Sans',Arial,sans-serif]">
			<MenuBar />
			<Toolbar1 />
			<Toolbar2 />
			<div className="h-[742px] shrink-0 flex border-t-2 border-t-[#aaa]">
				<div className="w-[230px] shrink-0 flex flex-col">
					<DataWindow />
					<Navigator />
				</div>
				<MarketWatch />
				<div className="flex-1 min-w-0 overflow-hidden pl-[2px]">
					<PriceChart />
				</div>
			</div>
			<div className="h-[487px] shrink-0 flex">
				<div className="w-[17px] shrink-0 flex flex-col">
					<div className="h-[24px] flex items-center justify-center font-bold text-[13px]">×</div>
					<div className="w-[15px] flex-1 bg-[#afcae2] flex flex-col justify-end items-center">
						<span className="[writing-mode:vertical-rl] rotate-180 text-[13px] tracking-[0.6px] text-[#333]">Strategy Tester</span>
					</div>
				</div>
				<div className="flex-1 min-w-0 pt-[6px]">
					<TesterChart />
					<TesterTabs />
				</div>
			</div>
			<div className="h-[5px] shrink-0" />
			<StatusBar />
		</div>
	);
}
